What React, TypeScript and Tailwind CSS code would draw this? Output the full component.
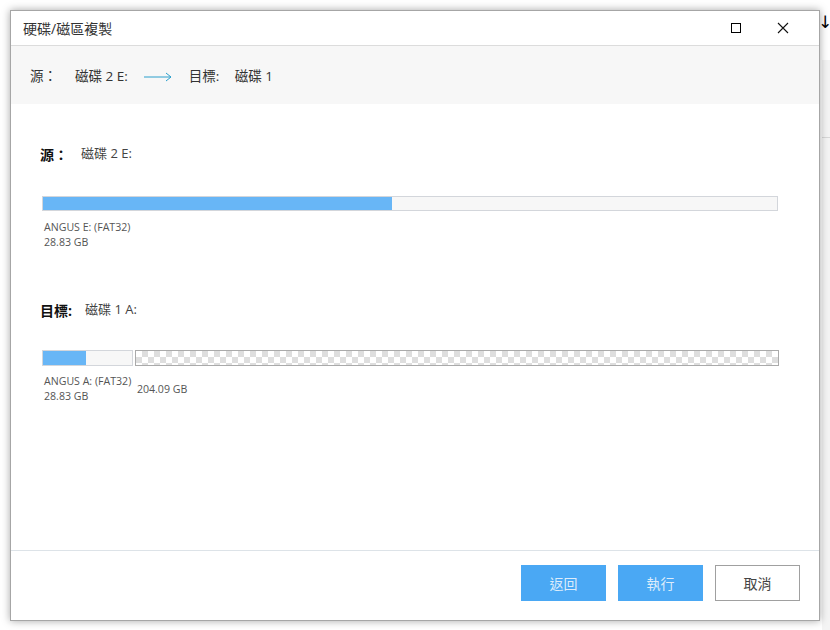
import React from "react";

const cjk = { fontFamily: '"Segoe UI", "Open Sans", "Noto Sans CJK TC", sans-serif' };

export default function App() {
  return (
    <div className="w-[830px] h-[630px] bg-white relative overflow-hidden" style={cjk}>
      {/* background app fragment on the right */}
      <div className="absolute left-[818px] top-[14px] text-[17px] leading-none text-black font-['DejaVu_Sans',sans-serif]">↓</div>
      <div className="absolute left-[822px] top-[60px] w-[8px] h-[570px] bg-[#f4f4f4]" />
      <div className="absolute left-[822px] top-[137px] w-[8px] h-px bg-[#d8d8d8]" />
      <div className="pt-[10px] pl-[10px]">
        <div className="w-[810px] h-[611px] border border-[#a6a6a6] bg-white flex flex-col shadow-[0_0_8px_rgba(0,0,0,0.35)] relative">
          {/* title bar */}
          <div className="h-[35px] flex items-center border-b border-[#dcdcdc] shrink-0">
            <div className="pl-[12px] text-[14px] text-[#333] flex-1">硬碟/磁區複製</div>
            <div className="w-[10px] h-[10px] border-[1.5px] border-black mr-[36px]" />
            <svg width="12" height="12" viewBox="0 0 12 12" className="mr-[30px]">
              <path d="M1 1 L11 11 M11 1 L1 11" stroke="#111" strokeWidth="1.1" />
            </svg>
          </div>
          {/* header band */}
          <div className="h-[58px] pt-[3px] bg-[#f7f7f7] flex items-center text-[13.5px] text-[#333] shrink-0">
            <span className="ml-[19px] w-[45px]">源：</span>
            <span>磁碟 2 E:</span>
            <svg width="28" height="10" viewBox="0 0 28 10" className="ml-[16px] mr-[17px]">
              <path d="M0 5 H27 M22 1 L27 5 L22 9" stroke="#2a9fcc" strokeWidth="1" fill="none" />
            </svg>
            <span className="w-[46px]">目標:</span>
            <span>磁碟 1</span>
          </div>
          {/* body */}
          <div className="flex-1 pl-[29px] pr-[40px]">
            <div className="mt-[40px] h-[20px] flex items-center text-[13px]">
              <span className="font-bold text-[#111] text-[14px] w-[41px]">源：</span>
              <span className="text-[#444]">磁碟 2 E:</span>
            </div>
            <div className="mt-[32px] ml-[2px] w-[736px] h-[15px] border border-[#d3d6db] bg-[#f7f7f7] flex">
              <div className="w-[349px] h-full bg-[#68b6f6]" />
            </div>
            <div className="mt-[9px] ml-[4px] text-[10.6px] leading-[15px] text-[#555]">
              <div>ANGUS E: (FAT32)</div>
              <div>28.83 GB</div>
            </div>
            <div className="mt-[50px] h-[20px] flex items-center text-[13px]">
              <span className="font-bold text-[#111] text-[14px] w-[45px]">目標:</span>
              <span className="text-[#444]">磁碟 1 A:</span>
            </div>
            <div className="mt-[30px] ml-[2px] flex gap-[2px]">
              <div className="w-[91px]">
                <div className="h-[16px] border border-[#d3d6db] bg-[#f7f7f7] flex">
                  <div className="w-[43px] h-full bg-[#68b6f6]" />
                </div>
                <div className="mt-[8px] ml-[2px] text-[10.6px] leading-[15px] text-[#555] whitespace-nowrap">
                  <div>ANGUS A: (FAT32)</div>
                  <div>28.83 GB</div>
                </div>
              </div>
              <div className="w-[645px]">
                <div className="h-[16px] border border-[#aaaaaa] bg-white bg-[conic-gradient(#dedede_25%,#ffffff_0_50%,#dedede_0_75%,#ffffff_0)] bg-[length:12px_12px]" />
                <div className="mt-[16px] ml-[2px] text-[10.6px] leading-[15px] text-[#555]">204.09 GB</div>
              </div>
            </div>
          </div>
          {/* footer */}
          <div className="h-[70px] border-t border-[#dde3e8] flex items-start justify-end gap-[12px] pt-[14px] pr-[19px] shrink-0 text-[14px]">
            <div className="w-[85px] h-[36px] bg-[#4aa8f4] text-[#dcecfb] flex items-center justify-center">返回</div>
            <div className="w-[85px] h-[36px] bg-[#4aa8f4] text-[#dcecfb] flex items-center justify-center">執行</div>
            <div className="w-[85px] h-[36px] border border-[#a0a0a0] bg-white text-[#444] flex items-center justify-center">取消</div>
          </div>
        </div>
      </div>
    </div>
  );
}
